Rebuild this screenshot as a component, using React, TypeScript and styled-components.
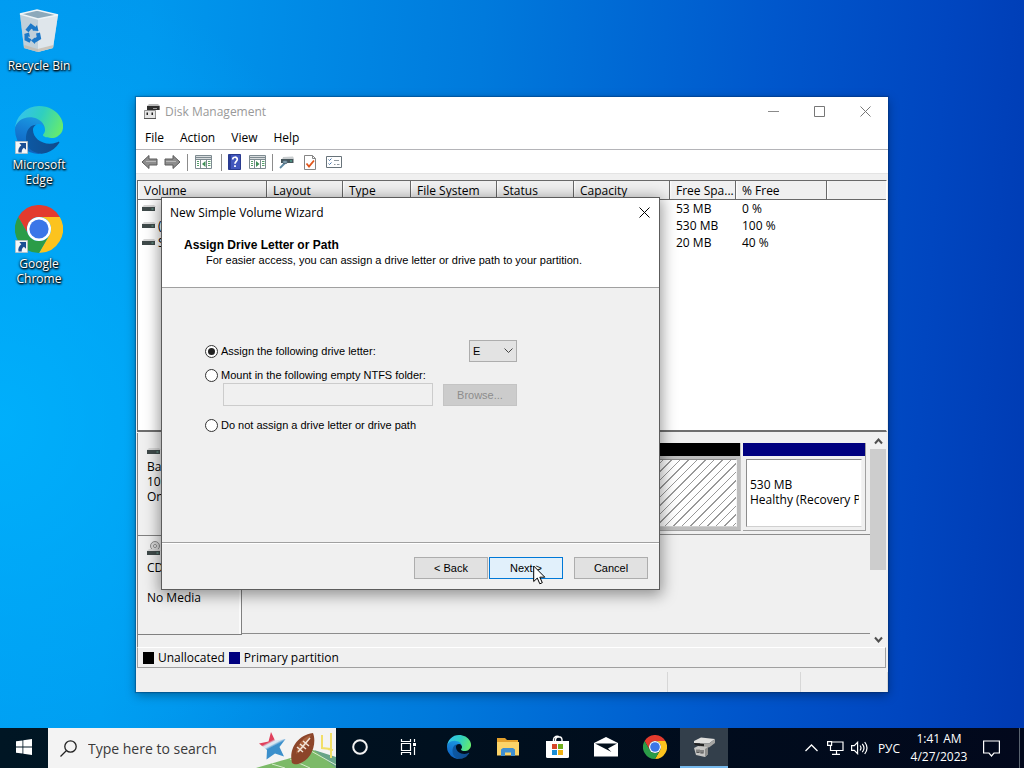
import React, { useId } from "react";
import styled, { createGlobalStyle, css } from "styled-components";

const UI = `"Open Sans", "Noto Sans", "Liberation Sans", sans-serif`;
const DIALOG = `"Liberation Sans", Arial, sans-serif`;

const GlobalStyle = createGlobalStyle`
  * { box-sizing: border-box; }
  body { margin: 0; font-family: ${UI}; font-size: 12px; color: #000; }
  button, input, select { font: inherit; color: inherit; margin: 0; }
  svg { display: block; flex: none; }
`;

const Screen = styled.div`
  display: flex;
  flex-direction: column;
  min-height: 100vh;
  overflow: hidden;
  background:
    radial-gradient(ellipse 40% 60% at 0% 55%, rgba(0, 182, 255, 0.75), rgba(0, 180, 255, 0)),
    linear-gradient(94deg, #009af0 0%, #0098ee 14%, #007adc 45%, #0057cc 72%, #0046c0 88%, #003ab2 100%);
`;

const Desktop = styled.main`
  position: relative;
  flex: 1;
  min-height: 720px;
`;

const Shortcuts = styled.nav`
  display: flex;
  flex-direction: column;
  width: 78px;
`;

const Shortcut = styled.a`
  display: flex;
  flex-direction: column;
  align-items: center;
  gap: 3px;
  height: 99px;
  padding-top: 7px;
  color: #fff;
  line-height: 15px;
  text-align: center;
  text-decoration: none;
  text-shadow: 0 1px 2px #000, 1px 1px 2px #000, 0 0 3px rgba(0, 0, 0, 0.7);
`;

const ShortcutImage = styled.span`
  position: relative;
  display: block;
`;

const ShortcutBadge = styled.span`
  position: absolute;
  left: 0;
  bottom: 0;
`;

const Window = styled.section`
  position: absolute;
  inset: 97px 136px 36px;
  display: flex;
  flex-direction: column;
  background: #f0f0f0;
  box-shadow: 0 0 1px 1px rgba(0, 40, 90, 0.35), 0 3px 10px rgba(0, 0, 0, 0.35);
`;

const TitleBar = styled.header`
  display: flex;
  align-items: center;
  gap: 5px;
  height: 29px;
  padding-left: 8px;
  background: #fff;
  color: #999;
`;

const Title = styled.h1`
  flex: 1;
  margin: 0;
  font-size: 12px;
  font-weight: 400;
`;

const CaptionButtons = styled.div`
  display: flex;
`;

const CaptionButton = styled.button`
  display: flex;
  align-items: center;
  justify-content: center;
  width: 46px;
  height: 28px;
  padding: 0;
  border: 0;
  background: transparent;
`;

const MenuBar = styled.nav`
  display: flex;
  height: 24px;
  padding-left: 1px;
  border-bottom: 1px solid #b4b4b8;
  background: #fff;
`;

const MenuItem = styled.button`
  padding: 0 8px;
  border: 0;
  background: transparent;
  line-height: 21px;
`;

const Toolbar = styled.div`
  display: flex;
  align-items: center;
  height: 24px;
  padding: 1px 0 0 2px;
  border-bottom: 1px solid #e4e4e4;
  background: #fff;
`;

const ToolButton = styled.button<{ $width?: number }>`
  display: flex;
  align-items: center;
  justify-content: center;
  width: ${(p) => p.$width ?? 23}px;
  height: 22px;
  padding: 0;
  border: 0;
  background: transparent;
`;

const ToolDivider = styled.span`
  width: 1px;
  height: 17px;
  margin: 0 1px 0 3px;
  background: #8c8c8c;
`;

const ListPane = styled.div`
  flex: 1;
  min-height: 60px;
  margin: 6px 1px 0;
  overflow: hidden;
  border: 1px solid #696969;
  border-right-color: #fff;
  border-bottom: 2px solid #6e6e6e;
  background: #fff;
`;

const VolumeTable = styled.table`
  width: 100%;
  table-layout: fixed;
  border-collapse: separate;
  border-spacing: 0;
`;

const Column = styled.col<{ $width?: number }>`
  width: ${(p) => (p.$width ? `${p.$width}px` : "auto")};
`;

const HeadCell = styled.th`
  height: 19px;
  padding: 1px 0 0 6px;
  border-right: 1px solid #696969;
  border-bottom: 1px solid #696969;
  background: linear-gradient(90deg, #fff 0, #f0f0f0 2px);
  font-weight: 400;
  line-height: 17px;
  text-align: left;
  white-space: nowrap;
  &:last-child { border-right: 0; }
`;

const Cell = styled.td`
  height: 17px;
  padding: 0 0 0 6px;
  line-height: 17px;
  white-space: nowrap;
  overflow: hidden;
  &:first-child { padding-left: 4px; }
`;

const VolumeName = styled.span`
  display: flex;
  align-items: center;
  gap: 2px;
`;

const GraphPane = styled.div`
  display: flex;
  height: 214px;
  margin: 1px 2px 0 1px;
  border-left: 1px solid #808080;
`;

const DiskRows = styled.div`
  flex: 1;
  min-width: 0;
  padding-top: 2px;
`;

const DiskRow = styled.div`
  display: flex;
  height: 101px;
  & + & { height: 99px; }
`;

const DiskLabel = styled.div`
  width: 104px;
  padding: 5px 9px;
  border-right: 1px solid #808080;
  border-bottom: 1px solid #808080;
  box-shadow: inset -2px 0 0 #fafafa;
  line-height: 15px;
`;

const DiskName = styled.p`
  margin: 3px 0 0;
`;

const MediaState = styled.p`
  margin: 15px 0 0;
`;

const DiskParts = styled.div`
  display: flex;
  flex: 1;
  min-width: 0;
  gap: 2px;
  margin-bottom: 1px;
  padding: 8px 4px 3px 2px;
  border-bottom: 1px solid #8c8c8c;
`;

const Partition = styled.div<{ $selected?: boolean }>`
  display: flex;
  flex-direction: column;
  width: 123px;
  border-right: 1px solid ${(p) => (p.$selected ? "#c4c4c4" : "#a0a0a0")};
  border-bottom: 1px solid #a0a0a0;
  ${(p) => p.$selected && css`flex: 1; background: #bdbdbd;`}
`;

const PartitionBar = styled.div<{ $color: string }>`
  height: 13px;
  background: ${(p) => p.$color};
`;

const PartitionBody = styled.div<{ $hatched?: boolean }>`
  flex: 1;
  margin: 3px;
  padding: 17px 2px 0 3px;
  overflow: hidden;
  border: 1px solid #8c8c8c;
  border-right-color: #f4f4f4;
  border-bottom-color: #d0d0d0;
  background: ${(p) =>
    p.$hatched ? "repeating-linear-gradient(135deg, #fff 0 5px, #999 5px 6px)" : "#fff"};
  line-height: 15px;
  white-space: nowrap;
`;

const ClippedText = styled.div`
  overflow: hidden;
`;

const ScrollBar = styled.div`
  display: flex;
  flex-direction: column;
  width: 16px;
  background: #f1f1f1;
`;

const ScrollButton = styled.button`
  display: flex;
  align-items: center;
  justify-content: center;
  height: 16px;
  padding: 0;
  border: 0;
  background: transparent;
`;

const ScrollTrack = styled.div`
  flex: 1;
`;

const ScrollThumb = styled.div`
  height: 121px;
  background: #cdcdcd;
`;

const Legend = styled.div`
  display: flex;
  align-items: center;
  gap: 4px;
  height: 21px;
  margin: 0 2px 0 1px;
  padding-left: 5px;
  border: 1px solid #a0a0a0;
  border-top-color: #fff;
  line-height: 16px;
`;

const Swatch = styled.span<{ $color: string }>`
  width: 11px;
  height: 12px;
  background: ${(p) => p.$color};
`;

const StatusBar = styled.footer`
  display: flex;
  height: 24px;
  padding-top: 4px;
`;

const StatusCell = styled.span<{ $width?: number }>`
  border-right: 1px solid #d7d7d7;
  ${(p) => (p.$width ? css`width: ${p.$width}px;` : css`flex: 1;`)}
`;

const Dialog = styled.form`
  position: absolute;
  left: 161px;
  top: 197px;
  width: 499px;
  border: 1px solid #5c5c5c;
  background: #f0f0f0;
  box-shadow: 0 3px 14px 2px rgba(0, 0, 0, 0.4);
  font-family: ${DIALOG};
  font-size: 11px;
`;

const DialogHeader = styled.header`
  height: 90px;
  border-bottom: 1px solid #a0a0a0;
  background: #fff;
`;

const DialogTitle = styled.div`
  display: flex;
  align-items: center;
  justify-content: space-between;
  height: 28px;
  padding-left: 8px;
  font-family: ${UI};
  font-size: 12px;
`;

const DialogClose = styled(CaptionButton)`
  width: 30px;
`;

const PageTitle = styled.h2`
  margin: 11px 0 0 22px;
  font-size: 12px;
  font-weight: 700;
  line-height: 16px;
`;

const PageSubtitle = styled.p`
  margin: 0 0 0 44px;
  line-height: 14px;
`;

const DialogBody = styled.fieldset`
  display: flex;
  flex-direction: column;
  width: 355px;
  height: 254px;
  margin: 0;
  padding: 52px 0 0 43px;
  border: 0;
`;

const Option = styled.div<{ $gap?: number }>`
  display: flex;
  align-items: center;
  justify-content: space-between;
  margin-top: ${(p) => p.$gap ?? 0}px;
`;

const RadioLabel = styled.label`
  display: flex;
  align-items: center;
  gap: 3px;
  height: 16px;
`;

const Radio = styled.input`
  appearance: none;
  display: grid;
  place-items: center;
  width: 13px;
  height: 13px;
  border: 1px solid #333;
  border-radius: 50%;
  background: #fff;
  &:checked::before {
    content: "";
    width: 7px;
    height: 7px;
    border-radius: 50%;
    background: #222;
  }
`;

const SelectBox = styled.div`
  display: grid;
  align-items: center;
  justify-items: end;
  & > * { grid-area: 1 / 1; }
  & > svg { margin-right: 4px; pointer-events: none; }
`;

const LetterSelect = styled.select`
  appearance: none;
  width: 48px;
  height: 22px;
  padding: 0 3px;
  border: 1px solid #adadad;
  border-radius: 0;
  background: #e3e3e3;
`;

const FolderInput = styled.input`
  width: 210px;
  height: 23px;
  margin-left: 18px;
  border: 1px solid #ccc;
  background: #f0f0f0;
`;

const PushButton = styled.button<{ $hot?: boolean }>`
  width: 74px;
  height: 22px;
  padding: 0;
  border: 1px solid ${(p) => (p.$hot ? "#0078d7" : "#adadad")};
  background: ${(p) => (p.$hot ? "#e1f0fb" : "#e1e1e1")};
  &:disabled { border-color: #c4c4c4; background: #ccc; color: #8c8c8c; }
`;

const DialogFooter = styled.footer`
  display: flex;
  justify-content: flex-end;
  gap: 1px;
  padding: 14px 11px 10px 0;
  border-top: 1px solid #a0a0a0;
  box-shadow: inset 0 1px 0 #fff;
`;

const CancelButton = styled(PushButton)`
  margin-left: 10px;
`;

const Pointer = styled.span`
  position: absolute;
  left: 533px;
  top: 565px;
`;

const Taskbar = styled.footer`
  display: flex;
  align-items: stretch;
  height: 40px;
  background: linear-gradient(90deg, #001624 0%, #000f1e 50%, #02081c 100%);
  color: #fff;
`;

const TaskButton = styled.button<{ $active?: boolean }>`
  display: flex;
  align-items: center;
  justify-content: center;
  width: 48px;
  padding: 0;
  border: 0;
  border-bottom: 2px solid ${(p) => (p.$active ? "#76b9ed" : "transparent")};
  background: ${(p) => (p.$active ? "#333f4b" : "transparent")};
`;

const PinnedApps = styled.div`
  display: flex;
  gap: 1px;
  margin-left: 3px;
`;

const SearchBox = styled.label`
  display: flex;
  align-items: center;
  width: 288px;
  padding-left: 12px;
  background: #f3f3f3;
  color: #333;
`;

const SearchInput = styled.input`
  flex: 1;
  min-width: 0;
  margin-left: 11px;
  padding: 0;
  border: 0;
  outline: 0;
  background: transparent;
  font-size: 14px;
  &::placeholder { color: #3a3a3a; opacity: 1; }
`;

const Tray = styled.div`
  display: flex;
  align-items: center;
  margin-left: auto;
`;

const TrayButton = styled.button<{ $width: number }>`
  display: flex;
  align-items: center;
  justify-content: center;
  width: ${(p) => p.$width}px;
  height: 40px;
  padding: 0;
  border: 0;
  background: transparent;
`;

const Clock = styled.time`
  width: 64px;
  line-height: 18px;
  text-align: center;
  white-space: nowrap;
`;

const ShowDesktop = styled.button`
  width: 5px;
  height: 40px;
  margin-left: 8px;
  padding: 0;
  border: 0;
  border-left: 1px solid #5a6470;
  background: transparent;
`;

function EdgeLogo({ size }: { size: number }) {
  const id = useId();
  return (
    <svg width={size} height={size} viewBox="0 0 256 256">
      <defs>
        <linearGradient id={`${id}a`} x1="0" y1="0" x2="1" y2="0">
          <stop offset="0" stopColor="#0c59a4" />
          <stop offset="1" stopColor="#114a8b" />
        </linearGradient>
        <linearGradient id={`${id}b`} x1="0.6" y1="0" x2="0.3" y2="1">
          <stop offset="0" stopColor="#1b9de2" />
          <stop offset="0.4" stopColor="#1680d6" />
          <stop offset="1" stopColor="#0d5fbd" />
        </linearGradient>
        <linearGradient id={`${id}c`} x1="0" y1="0.3" x2="1" y2="0.6">
          <stop offset="0" stopColor="#35c1f1" />
          <stop offset="0.5" stopColor="#2fcfc0" />
          <stop offset="1" stopColor="#66eb6e" />
        </linearGradient>
      </defs>
      <path fill={`url(#${id}b)`} d="M105.7 241.4c-8.9-5.5-16.7-12.8-22.8-21.3a80.7 80.7 0 0 1 29.5-120.4c3.1-1.5 8.4-4.1 15.6-4a32.4 32.4 0 0 1 25.7 13c4 5.4 6.3 11.9 6.3 18.7 0-.2 24.5-79.6-80-79.6-43.9 0-80 41.7-80 78.2a130.2 130.2 0 0 0 12.1 56 128 128 0 0 0 156.4 67.1 75.5 75.5 0 0 1-62.8-7.7z" />
      <path fill={`url(#${id}a)`} d="M231 190.5c-3.4 1.8-6.9 3.4-10.5 4.7a101.9 101.9 0 0 1-36 6.4c-47.4 0-88.7-32.6-88.7-74.4.1-11.4 6.4-21.9 16.4-27.3-42.9 1.8-53.9 46.5-53.9 72.6 0 74.1 68.2 81.5 82.9 81.5 8 0 19.9-2.3 27.1-4.6l1.3-.4a128.4 128.4 0 0 0 66.6-52.8 4 4 0 0 0-5.2-5.7z" />
      <path fill={`url(#${id}c)`} d="M152.3 148.9c-.8 1-3.3 2.5-3.3 5.7 0 2.6 1.7 5.2 4.8 7.3 14.4 10.1 41.7 8.7 41.8 8.7 10.7 0 21.3-2.9 30.5-8.4a61.9 61.9 0 0 0 30.5-53.4c.3-22.4-8-37.3-11.3-43.9C224 23.5 177.7 0 128 0A128 128 0 0 0 0 126.2c.5-36.5 36.8-66 80-66 3.5 0 23.5.3 42 10.1 16.3 8.5 24.9 18.9 30.8 29.1 6.2 10.6 7.3 24.1 7.3 29.5 0 5.4-2.7 13.3-7.8 20z" />
    </svg>
  );
}

function ChromeLogo({ size }: { size: number }) {
  return (
    <svg width={size} height={size} viewBox="0 0 48 48">
      <path fill="#e33b2e" d="M24 12h20.8A24 24 0 0 0 3.2 12l10.4 18A12 12 0 0 1 24 12z" />
      <path fill="#fcc31e" d="M34.4 30 24 48a24 24 0 0 0 20.8-36H24a12 12 0 0 1 10.4 18z" />
      <path fill="#2b9c48" d="M13.6 30 3.2 12A24 24 0 0 0 24 48l10.4-18a12 12 0 0 1-20.8 0z" />
      <circle cx="24" cy="24" r="12" fill="#fff" />
      <circle cx="24" cy="24" r="9.6" fill="#3a76e8" />
    </svg>
  );
}

const RecycleBin = () => (
  <svg width="48" height="48" viewBox="0 0 48 48">
    <path fill="#cfdbe4" d="M5 7 9 41l14 4 15-4 5-33-16-4z" />
    <path fill="#b4c6d2" d="m5 7 4 34 14 4V11z" opacity="0.55" />
    <path fill="#e4eaee" d="m23 11 20-3-5 33-15 4z" opacity="0.75" />
    <path fill="#8ca9bb" stroke="#eef4f7" strokeWidth="1.3" d="M5 7 22 3l21 5-20 4z" />
    <path fill="#c2b6a8" d="m9.500 38 13 4 16-4-.5 3-15 4-14-4z" opacity="0.7" />
    <g fill="none" stroke="#1b78c8" strokeWidth="4">
      <path d="m12 24 4-5 4 3" />
      <path d="m23 26 1 5-5 3" />
      <path d="m15.500 34-4-2 0-5" />
    </g>
    <path fill="#1b78c8" d="m22 18 1.500 6-6-.5zM20 30.500v6.500l-4-3.500zM9 27l5-1.500 1 4.500z" />
  </svg>
);

const ShortcutArrow = () => (
  <svg width="13" height="13" viewBox="0 0 13 13">
    <path fill="#f6f6f6" stroke="#aaa" strokeWidth="0.6" d="M.3.300h12.400v12.400H.3z" />
    <path fill="#1d4f93" d="M4.300 2h6.700v6.700L8.900 6.700C7 8 6.500 9.500 6.800 11.500H3.500C2.800 8.500 4 6 6.300 4.200z" />
  </svg>
);

const DiskManagerIcon = () => (
  <svg width="16" height="16" viewBox="0 0 16 16">
    <path fill="#bbb" d="M5 0h9l2 2v4H3V2z" />
    <path fill="#2e2e2e" d="M3 2h12.500v4H3z" />
    <path fill="#9a9a9a" d="M9 4h4v1H9z" />
    <path fill="#e4e4e4" stroke="#777" strokeWidth="0.8" d="M.5 6.500h11v8H.5z" />
    <path fill="#222" d="M2.500 8.500h1.500v2.500H2.500zM7.500 8.500H9v2.500H7.500z" />
    <path fill="#555" d="M0 14h12v1H0z" />
  </svg>
);

const ArrowIcon = ({ back }: { back?: boolean }) => (
  <svg width="17" height="16" viewBox="0 0 17 16">
    <path
      fill="#8d8d8d"
      stroke="#5b5b5b"
      strokeLinejoin="round"
      d={back ? "M1 8 8 1.500V5h8v6H8v3.500z" : "M16 8 9 1.500V5H1v6h8v3.500z"}
    />
    <path stroke="#b9b9b9" d={back ? "M5 7.500h10" : "M2 7.500h10"} />
  </svg>
);

const PaneIcon = ({ flip }: { flip?: boolean }) => (
  <svg width="17" height="14" viewBox="0 0 17 14">
    <path fill="#fff" stroke="#7d8a90" d="M.5.500h16v13H.5z" />
    <path stroke="#7d8a90" d="M1 2.500h15" strokeWidth="1.600" />
    <path stroke="#7d8a90" d="M1 4.500h15M5.500 5v8M11.500 5v8" />
    <path stroke="#55a06a" d="M2 6.500h2M2 8.500h2M2 10.500h2M13 6.500h2.500M13 8.500h2.500M13 10.500h2.500" />
    <path fill="#3f8f58" d={flip ? "m7 6 3.500 3L7 12z" : "M10.500 6 7 9l3.500 3z"} />
  </svg>
);

const HelpIcon = () => (
  <svg width="13" height="16" viewBox="0 0 13 16">
    <path fill="#4257bd" stroke="#2a3b8f" d="M.5.500h12v15H.5z" />
    <path fill="#2b3d98" d="M1 1h2v14H1z" />
    <path fill="none" stroke="#fff" strokeWidth="1.700" d="M4.700 5.500c0-3 4.600-3 4.600-.2C9.300 7.300 7 7.300 7 9.800" />
    <path fill="#fff" d="M6.100 11.300h1.800v1.800H6.100z" />
  </svg>
);

const KeyDriveIcon = () => (
  <svg width="15" height="13" viewBox="0 0 15 13">
    <path fill="#c9cdcf" d="m4 1 10-.5 1 2-1 1H3z" />
    <path fill="#46555a" d="M2 3h12.500v4H2z" />
    <path fill="#55c7a8" d="M11 4.500h2v1h-2z" />
    <path stroke="#5c87a0" strokeWidth="1.800" d="M6 7 1 12" />
    <ellipse cx="6" cy="6" rx="2.600" ry="1.700" fill="#7d9aa8" stroke="#456" strokeWidth="0.700" />
  </svg>
);

const CheckPageIcon = () => (
  <svg width="12" height="15" viewBox="0 0 12 15">
    <path fill="#fff" stroke="#858585" d="M.5.500h8l3 3v11H.5z" />
    <path fill="none" stroke="#858585" d="M8.500.5v3h3" />
    <path fill="none" stroke="#e0561c" strokeWidth="1.800" d="m2.500 8.500 2.500 3 5-6" />
  </svg>
);

const TasksIcon = () => (
  <svg width="16" height="12" viewBox="0 0 16 12">
    <path fill="#fff" stroke="#68737a" d="M.5.500h15v11H.5z" />
    <path fill="none" stroke="#4673a8" d="m2.500 3.500 1 1 2-2m-3 5 1 1 2-2" />
    <path stroke="#909aa0" d="M8 4.500h5M8 8.500h1.500M11 8.500h2.500" />
  </svg>
);

const DriveShape = () => (
  <>
    <path fill="#d6d6d6" d="M2 3h10l2 2H0z" />
    <path fill="#3f4a4a" d="M0 5h13v4H0z" />
    <path fill="#6fae9c" d="M9.500 6.500h2v1h-2z" />
  </>
);

const DriveIcon = () => (
  <svg width="14" height="12" viewBox="0 1 14 12">
    <DriveShape />
  </svg>
);

const DiskIcon = ({ optical }: { optical?: boolean }) => (
  <svg width="14" height="16" viewBox="0 -5 14 16">
    {optical && (
      <g fill="#d9d9d9" stroke="#8a8a8a">
        <circle cx="8" cy="0" r="4.500" />
        <circle cx="8" cy="0" r="1.500" fill="#fff" />
      </g>
    )}
    <DriveShape />
  </svg>
);

const StarGameArt = () => (
  <svg width="80" height="40" viewBox="0 0 80 40">
    <defs>
      <linearGradient id="star-fill" x1="0.2" y1="0" x2="0.7" y2="1">
        <stop offset="0.35" stopColor="#e0405c" />
        <stop offset="0.42" stopColor="#d9e6f2" />
        <stop offset="0.48" stopColor="#d9e6f2" />
        <stop offset="0.56" stopColor="#3b8fcb" />
      </linearGradient>
    </defs>
    <path fill="#7cba68" d="M0 40C18 34 42 30 54 21L80 30v10z" />
    <path fill="#68a488" d="m58 22 22 7v11z" />
    <path stroke="#d5ebcc" d="m16 36 13 4M34 31l20 9M55 23l25 14" />
    <path fill="none" stroke="#f2df67" strokeWidth="2" d="M66 7v13l9 1M75 5v25M72 21l5 1" />
    <path fill="url(#star-fill)" d="m15 4 4 8.500 10.500-1.500-6 8 4.500 9.500-9-3-8.500 6 .5-9.500L3 15.500l9.500-2z" />
    <path fill="#8c452a" d="M36 35c-3-12 3-27 21-30 4 10-1 28-15 31-2 .5-4 .5-6-1z" />
    <path fill="#a8603c" d="M40 26c1-9 7-17 15-19-3 8-7 15-15 19z" />
    <path stroke="#f3e4d8" strokeWidth="1.500" d="M42 24 54 10M41 19l6 5M44 16l6 5M47 13l6 5" />
  </svg>
);

const App = () => (
  <>
    <GlobalStyle />
    <Screen>
      <Desktop>
        <Shortcuts aria-label="Desktop shortcuts">
          <Shortcut href="#recycle-bin">
            <ShortcutImage><RecycleBin /></ShortcutImage>
            Recycle Bin
          </Shortcut>
          <Shortcut href="#edge">
            <ShortcutImage>
              <EdgeLogo size={48} />
              <ShortcutBadge><ShortcutArrow /></ShortcutBadge>
            </ShortcutImage>
            <span>Microsoft<br />Edge</span>
          </Shortcut>
          <Shortcut href="#chrome">
            <ShortcutImage>
              <ChromeLogo size={48} />
              <ShortcutBadge><ShortcutArrow /></ShortcutBadge>
            </ShortcutImage>
            <span>Google<br />Chrome</span>
          </Shortcut>
        </Shortcuts>

        <Window aria-label="Disk Management">
          <TitleBar>
            <DiskManagerIcon />
            <Title>Disk Management</Title>
            <CaptionButtons>
              <CaptionButton aria-label="Minimize">
                <svg width="11" height="11"><path stroke="#8a8a8a" d="M0 5.500h11" /></svg>
              </CaptionButton>
              <CaptionButton aria-label="Maximize">
                <svg width="11" height="11"><path fill="none" stroke="#777" d="M.5.500h10v10H.5z" /></svg>
              </CaptionButton>
              <CaptionButton aria-label="Close">
                <svg width="11" height="11"><path stroke="#777" d="m.5.500 10 10m0-10-10 10" /></svg>
              </CaptionButton>
            </CaptionButtons>
          </TitleBar>
          <MenuBar>
            {["File", "Action", "View", "Help"].map((name) => (
              <MenuItem key={name}>{name}</MenuItem>
            ))}
          </MenuBar>
          <Toolbar role="toolbar">
            <ToolButton aria-label="Back"><ArrowIcon back /></ToolButton>
            <ToolButton aria-label="Forward"><ArrowIcon /></ToolButton>
            <ToolDivider />
            <ToolButton $width={29} aria-label="Show console tree"><PaneIcon /></ToolButton>
            <ToolDivider />
            <ToolButton aria-label="Help"><HelpIcon /></ToolButton>
            <ToolButton aria-label="Show action pane"><PaneIcon flip /></ToolButton>
            <ToolDivider />
            <ToolButton $width={24} aria-label="Rescan disks"><KeyDriveIcon /></ToolButton>
            <ToolButton $width={24} aria-label="Properties"><CheckPageIcon /></ToolButton>
            <ToolButton aria-label="Tasks"><TasksIcon /></ToolButton>
          </Toolbar>

          <ListPane>
            <VolumeTable>
              <colgroup>
                {[129, 76, 68, 86, 77, 96, 66, 91].map((w, i) => (
                  <Column key={i} $width={w} />
                ))}
                <Column />
              </colgroup>
              <thead>
                <tr>
                  {["Volume", "Layout", "Type", "File System", "Status", "Capacity", "Free Spa...", "% Free", ""].map(
                    (name) => <HeadCell key={name} scope="col">{name}</HeadCell>
                  )}
                </tr>
              </thead>
              <tbody>
                {[
                  ["", "53 MB", "0 %"],
                  ["(Disk 0)", "530 MB", "100 %"],
                  ["System", "20 MB", "40 %"],
                ].map(([name, free, percent]) => (
                  <tr key={free}>
                    <Cell><VolumeName><DriveIcon />{name}</VolumeName></Cell>
                    <Cell colSpan={5} />
                    <Cell>{free}</Cell>
                    <Cell>{percent}</Cell>
                    <Cell />
                  </tr>
                ))}
              </tbody>
            </VolumeTable>
          </ListPane>

          <GraphPane>
            <DiskRows>
              <DiskRow>
                <DiskLabel>
                  <DiskIcon />
                  <DiskName>Basic</DiskName>
                  <div>100 GB</div>
                  <div>Online</div>
                </DiskLabel>
                <DiskParts>
                  <Partition $selected>
                    <PartitionBar $color="#000" />
                    <PartitionBody $hatched />
                  </Partition>
                  <Partition>
                    <PartitionBar $color="#00007f" />
                    <PartitionBody>
                      <ClippedText>530 MB</ClippedText>
                      <ClippedText>Healthy (Recovery Partition)</ClippedText>
                    </PartitionBody>
                  </Partition>
                </DiskParts>
              </DiskRow>
              <DiskRow>
                <DiskLabel>
                  <DiskIcon optical />
                  <DiskName>CD</DiskName>
                  <MediaState>No Media</MediaState>
                </DiskLabel>
                <DiskParts />
              </DiskRow>
            </DiskRows>
            <ScrollBar>
              <ScrollButton aria-label="Scroll up">
                <svg width="9" height="7"><path fill="none" stroke="#505050" strokeWidth="2" d="m1 5.500 3.500-4 3.500 4" /></svg>
              </ScrollButton>
              <ScrollTrack><ScrollThumb /></ScrollTrack>
              <ScrollButton aria-label="Scroll down">
                <svg width="9" height="7"><path fill="none" stroke="#505050" strokeWidth="2" d="m1 1.500 3.500 4 3.500-4" /></svg>
              </ScrollButton>
            </ScrollBar>
          </GraphPane>

          <Legend>
            <Swatch $color="#000" /> Unallocated
            <Swatch $color="#00007f" /> Primary partition
          </Legend>
          <StatusBar>
            <StatusCell />
            <StatusCell $width={133} />
            <StatusCell $width={87} />
          </StatusBar>
        </Window>

        <Dialog role="dialog" aria-label="New Simple Volume Wizard" onSubmit={(e) => e.preventDefault()}>
          <DialogHeader>
            <DialogTitle>
              New Simple Volume Wizard
              <DialogClose type="button" aria-label="Close">
                <svg width="11" height="11"><path stroke="#000" d="m.5.500 10 10m0-10-10 10" /></svg>
              </DialogClose>
            </DialogTitle>
            <PageTitle>Assign Drive Letter or Path</PageTitle>
            <PageSubtitle>For easier access, you can assign a drive letter or drive path to your partition.</PageSubtitle>
          </DialogHeader>
          <DialogBody>
            <Option>
              <RadioLabel>
                <Radio type="radio" name="mount" defaultChecked />
                Assign the following drive letter:
              </RadioLabel>
              <SelectBox>
                <LetterSelect aria-label="Drive letter" defaultValue="E">
                  <option>E</option>
                </LetterSelect>
                <svg width="9" height="6"><path fill="none" stroke="#444" d="m.5.500 4 4 4-4" /></svg>
              </SelectBox>
            </Option>
            <Option $gap={5}>
              <RadioLabel>
                <Radio type="radio" name="mount" />
                Mount in the following empty NTFS folder:
              </RadioLabel>
            </Option>
            <Option>
              <FolderInput aria-label="NTFS folder" disabled />
              <PushButton type="button" disabled>Browse...</PushButton>
            </Option>
            <Option $gap={11}>
              <RadioLabel>
                <Radio type="radio" name="mount" />
                Do not assign a drive letter or drive path
              </RadioLabel>
            </Option>
          </DialogBody>
          <DialogFooter>
            <PushButton type="button">&lt; Back</PushButton>
            <PushButton $hot>Next &gt;</PushButton>
            <CancelButton type="button">Cancel</CancelButton>
          </DialogFooter>
        </Dialog>

        <Pointer>
          <svg width="13" height="20" viewBox="0 0 13 20">
            <path fill="#fff" stroke="#000" d="M.7 1v15.500l3.600-3.400 2.500 5.700 2.500-1.100-2.500-5.500h5z" />
          </svg>
        </Pointer>
      </Desktop>

      <Taskbar>
        <TaskButton aria-label="Start">
          <svg width="16" height="16" viewBox="0 0 16 16">
            <path fill="#fff" d="m0 2.300 6.500-.9v6.200H0zM7.300 1.300 16 0v7.600H7.300zM0 8.400h6.500v6.200L0 13.700zM7.300 8.400H16V16l-8.700-1.300z" />
          </svg>
        </TaskButton>
        <SearchBox>
          <svg width="17" height="17" viewBox="0 0 17 17">
            <g fill="none" stroke="#222" strokeWidth="1.300">
              <circle cx="10.500" cy="6.500" r="5.700" />
              <path d="M6.500 10.500.5 16.500" />
            </g>
          </svg>
          <SearchInput placeholder="Type here to search" aria-label="Search" />
          <StarGameArt />
        </SearchBox>
        <TaskButton aria-label="Cortana">
          <svg width="18" height="18"><circle cx="9" cy="9" r="6.800" fill="none" stroke="#f2f2f2" strokeWidth="2" /></svg>
        </TaskButton>
        <TaskButton aria-label="Task view">
          <svg width="17" height="16" viewBox="0 0 17 16">
            <path fill="none" stroke="#fff" strokeWidth="1.200" d="M1.500 0v2.500h9V0M1.500 4.500h9v7h-9zM1.500 16v-2.500h9V16M14.500 0v3M14.500 8v8" />
            <path fill="#fff" d="M13 4h3v3h-3z" />
          </svg>
        </TaskButton>
        <PinnedApps>
          <TaskButton aria-label="Microsoft Edge"><EdgeLogo size={24} /></TaskButton>
          <TaskButton aria-label="File Explorer">
            <svg width="22" height="18" viewBox="0 0 22 18">
              <path fill="#e3a02c" d="M0 0h8l2 2h11v4H0z" />
              <path fill="#fbd368" d="M0 4h22v13.500H0z" />
              <path fill="#3f8fd0" d="M4 18v-6.500l2-1.500h10l2 1.500V18h-4v-3.500H8V18z" />
            </svg>
          </TaskButton>
          <TaskButton aria-label="Microsoft Store">
            <svg width="23" height="24" viewBox="0 0 23 24">
              <path fill="none" stroke="#fff" strokeWidth="1.400" d="M7.500 7V4.500a3.500 3.500 0 0 1 6-2.200M9.500 7V4.500a3.300 3.300 0 0 1 6.500 0V7" />
              <path fill="#fff" d="M0 6h23v15.500q0 1.500-1.500 1.500h-20Q0 23 0 21.500z" />
              <path fill="#d6472a" d="M6 9h5v5H6z" />
              <path fill="#6fae1c" d="M12 9h5v5h-5z" />
              <path fill="#1b8fd8" d="M6 15h5v5H6z" />
              <path fill="#f2b214" d="M12 15h5v5h-5z" />
            </svg>
          </TaskButton>
          <TaskButton aria-label="Mail">
            <svg width="24" height="20" viewBox="0 0 24 20">
              <path fill="#fff" d="M0 6 12 0l12 6v13.500H0z" />
              <path fill="#04101c" d="M1 6.500h22l-9 5 3.500 3.500z" />
            </svg>
          </TaskButton>
          <TaskButton aria-label="Google Chrome"><ChromeLogo size={24} /></TaskButton>
          <TaskButton $active aria-label="Disk Management">
            <svg width="24" height="21" viewBox="0 0 24 21">
              <path fill="#dededc" d="m2 4 7-3.500L23 2l-6 4.500L2 6z" />
              <path fill="#a5a5a3" d="m8 6 9 .5L23 2v4l-6 4.500-9-1z" />
              <path fill="#222" d="m2 6 10 1v2.500L3 8z" />
              <path fill="#c6c6c4" d="m2 11 4-2 10 1v7l-3 3-9-2z" />
              <path fill="#8d8d8b" d="m13 12 3-2v7l-3 3z" />
              <path fill="none" stroke="#555" strokeWidth="1.200" d="M5 12.500v3h2v-3M9 13v3h2v-3" />
            </svg>
          </TaskButton>
        </PinnedApps>
        <Tray>
          <TrayButton $width={24} aria-label="Show hidden icons">
            <svg width="13" height="8"><path fill="none" stroke="#fff" strokeWidth="1.300" d="m.5 7 6-6 6 6" /></svg>
          </TrayButton>
          <TrayButton $width={24} aria-label="Network">
            <svg width="17" height="14" viewBox="0 0 17 14">
              <path fill="none" stroke="#fff" strokeWidth="1.200" d="M5 1h11v8.500H3.500V4M.6.600h4v3.800h-4zM9.500 10v3M5 13.300h8" />
            </svg>
          </TrayButton>
          <TrayButton $width={24} aria-label="Volume">
            <svg width="17" height="14" viewBox="0 0 17 14">
              <path fill="none" stroke="#fff" strokeWidth="1.200" d="M.6 4.600h2.700L6.600 1.300v11.400L3.300 9.400H.6zM9 4.500q2 2.500 0 5M11.300 2.800q3.400 4.200 0 8.400M13.700 1q4.600 6 0 12" />
            </svg>
          </TrayButton>
          <TrayButton $width={36} aria-label="Input language">РУС</TrayButton>
          <Clock>1:41 AM<br />4/27/2023</Clock>
          <TrayButton $width={40} aria-label="Notifications">
            <svg width="17" height="17" viewBox="0 0 17 17">
              <path fill="none" stroke="#fff" strokeWidth="1.200" d="M.6 1h15.800v12H11l-2.500 3L6 13H.6z" />
            </svg>
          </TrayButton>
          <ShowDesktop aria-label="Show desktop" />
        </Tray>
      </Taskbar>
    </Screen>
  </>
);

export default App;
